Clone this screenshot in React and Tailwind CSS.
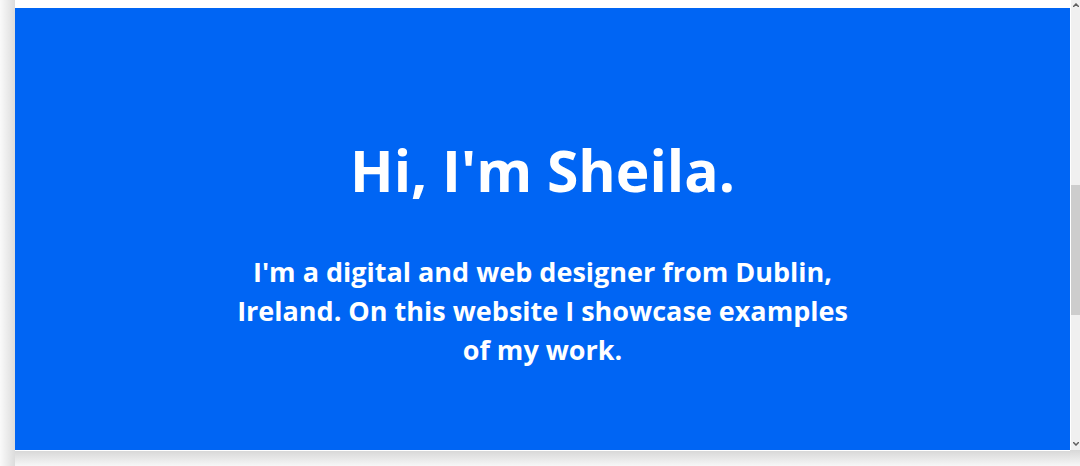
export default function App() {
	return (
		<div className="flex h-[466px] w-[1080px] overflow-hidden bg-[#f4f4f4]" style={{ fontFamily: '"Open Sans", sans-serif' }}>
			{/* left frame shadow */}
			<div className="h-full w-[15px] bg-gradient-to-r from-[#fafafa] to-[#dcdcdc]" />

			<div className="flex w-[1055px] flex-col">
				<div className="bg-white pt-[8px] pb-[1px]">
					{/* Hero */}
					<section className="flex h-[442px] flex-col items-center bg-[#0065f4] pt-[129px] text-center text-white">
						<h1 className="text-[57px] font-bold leading-[67px]">Hi, I'm Sheila.</h1>
						<p className="mt-[48px] max-w-[630px] text-[27px] font-bold leading-[39px]">
							I'm a digital and web designer from Dublin, Ireland. On this website I showcase examples of my work.
						</p>
					</section>
				</div>
				<div className="flex-1 bg-gradient-to-b from-[#d8d8d8] to-[#f7f7f7]" />
			</div>

			{/* scrollbar */}
			<div className="flex w-[10px] flex-col">
				<div className="flex h-[450px] flex-col border-l border-white bg-[#f0f0f0]">
					<div className="flex h-[14px] items-start justify-center pt-[3px]">
						<svg width="6" height="4" viewBox="0 0 6 4"><path d="M0 4 L3 1 L6 4" fill="none" stroke="#606060" strokeWidth="1.5" /></svg>
					</div>
					<div className="mt-[171px] h-[130px] bg-[#cdcdcd]" />
					<div className="mt-auto flex h-[14px] items-end justify-center pb-[4px]">
						<svg width="6" height="4" viewBox="0 0 6 4"><path d="M0 0 L3 3 L6 0" fill="none" stroke="#606060" strokeWidth="1.5" /></svg>
					</div>
				</div>
				<div className="flex-1 bg-gradient-to-b from-[#d8d8d8] to-[#f7f7f7]" />
			</div>
		</div>
	);
}
